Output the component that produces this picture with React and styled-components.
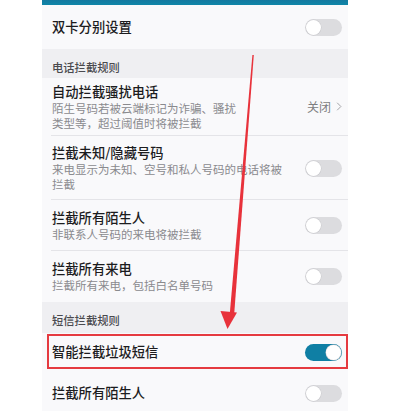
import styled, { createGlobalStyle } from 'styled-components';

const GlobalStyle = createGlobalStyle`
  html, body {
    margin: 0;
    padding: 0;
    background: #ffffff;
  }
  body {
    font-family: 'Noto Sans CJK SC', 'Noto Sans', sans-serif;
  }
`;

const callRules = [
  {
    title: '自动拦截骚扰电话',
    desc: ['陌生号码若被云端标记为诈骗、骚扰', '类型等，超过阈值时将被拦截'],
    value: '关闭',
    height: 58,
  },
  {
    title: '拦截未知/隐藏号码',
    desc: ['来电显示为未知、空号和私人号码的电话将被', '拦截'],
    height: 64,
  },
  { title: '拦截所有陌生人', desc: ['非联系人号码的来电将被拦截'], height: 51 },
  { title: '拦截所有来电', desc: ['拦截所有来电，包括白名单号码'], height: 51 },
];

export default function App() {
  return (
    <Page>
      <GlobalStyle />
      <Panel>
        <TopBar />
        <Row height={44}>
          <RowText>
            <Title>双卡分别设置</Title>
          </RowText>
          <Toggle />
        </Row>

        <SectionHeader height={29}>电话拦截规则</SectionHeader>
        {callRules.map((rule, i) => (
          <Row key={rule.title} height={rule.height} divider={i < callRules.length - 1}>
            <RowText>
              <Title>{rule.title}</Title>
              {rule.desc.map((line) => (
                <Desc key={line}>{line}</Desc>
              ))}
            </RowText>
            {rule.value ? (
              <Value>
                {rule.value}
                <Chevron viewBox="0 0 8 12">
                  <path d="M1.5 1 L6.5 6 L1.5 11" />
                </Chevron>
              </Value>
            ) : (
              <Toggle />
            )}
          </Row>
        ))}

        <SectionHeader height={31}>短信拦截规则</SectionHeader>
        <Row height={38} highlighted>
          <RowText>
            <Title>智能拦截垃圾短信</Title>
          </RowText>
          <Toggle on />
        </Row>
        <Row height={44}>
          <RowText>
            <Title>拦截所有陌生人</Title>
          </RowText>
          <Toggle />
        </Row>
      </Panel>

      <Arrow viewBox="0 0 393 411">
        <polygon points="252.4,55 253.8,55 234.2,314 229.8,313.6" fill="#e8323b" />
        <polygon points="220.5,311 237,312.5 227.5,329" fill="#e8323b" />
      </Arrow>
    </Page>
  );
}

function Toggle({ on }) {
  return (
    <Track on={on}>
      <Knob on={on} />
    </Track>
  );
}

const Page = styled.div`
  position: relative;
  width: 393px;
  height: 411px;
  overflow: hidden;
  background: #ffffff;
`;

const Panel = styled.div`
  margin: 0 45px 0 42px;
  height: 100%;
  background: #f9f9fb;
  display: flex;
  flex-direction: column;
`;

const TopBar = styled.div`
  flex-shrink: 0;
  height: 5px;
  background: linear-gradient(#1479a0, #0f86a8);
`;

const Row = styled.div`
  position: relative;
  display: flex;
  align-items: center;
  justify-content: space-between;
  flex-shrink: 0;
  box-sizing: border-box;
  height: ${(p) => p.height}px;
  padding: 0 6px 0 10px;
  background: #f9f9fb;

  &::before {
    content: '';
    display: ${(p) => (p.divider ? 'block' : 'none')};
    position: absolute;
    left: 9px;
    right: 0;
    bottom: 0;
    height: 1px;
    background: #e4e4e8;
  }

  &::after {
    content: '';
    display: ${(p) => (p.highlighted ? 'block' : 'none')};
    position: absolute;
    left: 5px;
    right: 0;
    top: 1px;
    bottom: 2px;
    border: 2.5px solid #e53a40;
  }
`;

const RowText = styled.div`
  display: flex;
  flex-direction: column;
`;

const Title = styled.div`
  font-size: 13.3px;
  line-height: 18px;
  color: #1c1c1e;
  font-weight: 500;
`;

const Desc = styled.div`
  font-size: 11.5px;
  line-height: 15px;
  color: #8a8a8e;
`;

const Value = styled.div`
  display: flex;
  align-items: center;
  gap: 5px;
  font-size: 12px;
  color: #7d7d80;
  margin-top: -2px;
`;

const Chevron = styled.svg`
  width: 6px;
  height: 11px;
  fill: none;
  stroke: #9a9a9e;
  stroke-width: 1.2;
`;

const SectionHeader = styled.div`
  flex-shrink: 0;
  box-sizing: border-box;
  height: ${(p) => p.height}px;
  padding: 10px 10px 0;
  line-height: 16px;
  background: #efeff2;
  font-size: 11.3px;
  color: #4a4a4e;
  font-weight: 500;
`;

const Track = styled.div`
  position: relative;
  width: 37px;
  height: 17px;
  border-radius: 9px;
  background: ${(p) => (p.on ? '#0f7fa4' : '#dcdcdf')};
  flex-shrink: 0;
`;

const Knob = styled.div`
  position: absolute;
  top: 1px;
  left: ${(p) => (p.on ? '21px' : '1px')};
  width: 15px;
  height: 15px;
  border-radius: 50%;
  background: #ffffff;
  box-shadow: 0 0 0 0.5px #c8c8cc;
`;

const Arrow = styled.svg`
  position: absolute;
  left: 0;
  top: 0;
  width: 393px;
  height: 411px;
  pointer-events: none;
`;
